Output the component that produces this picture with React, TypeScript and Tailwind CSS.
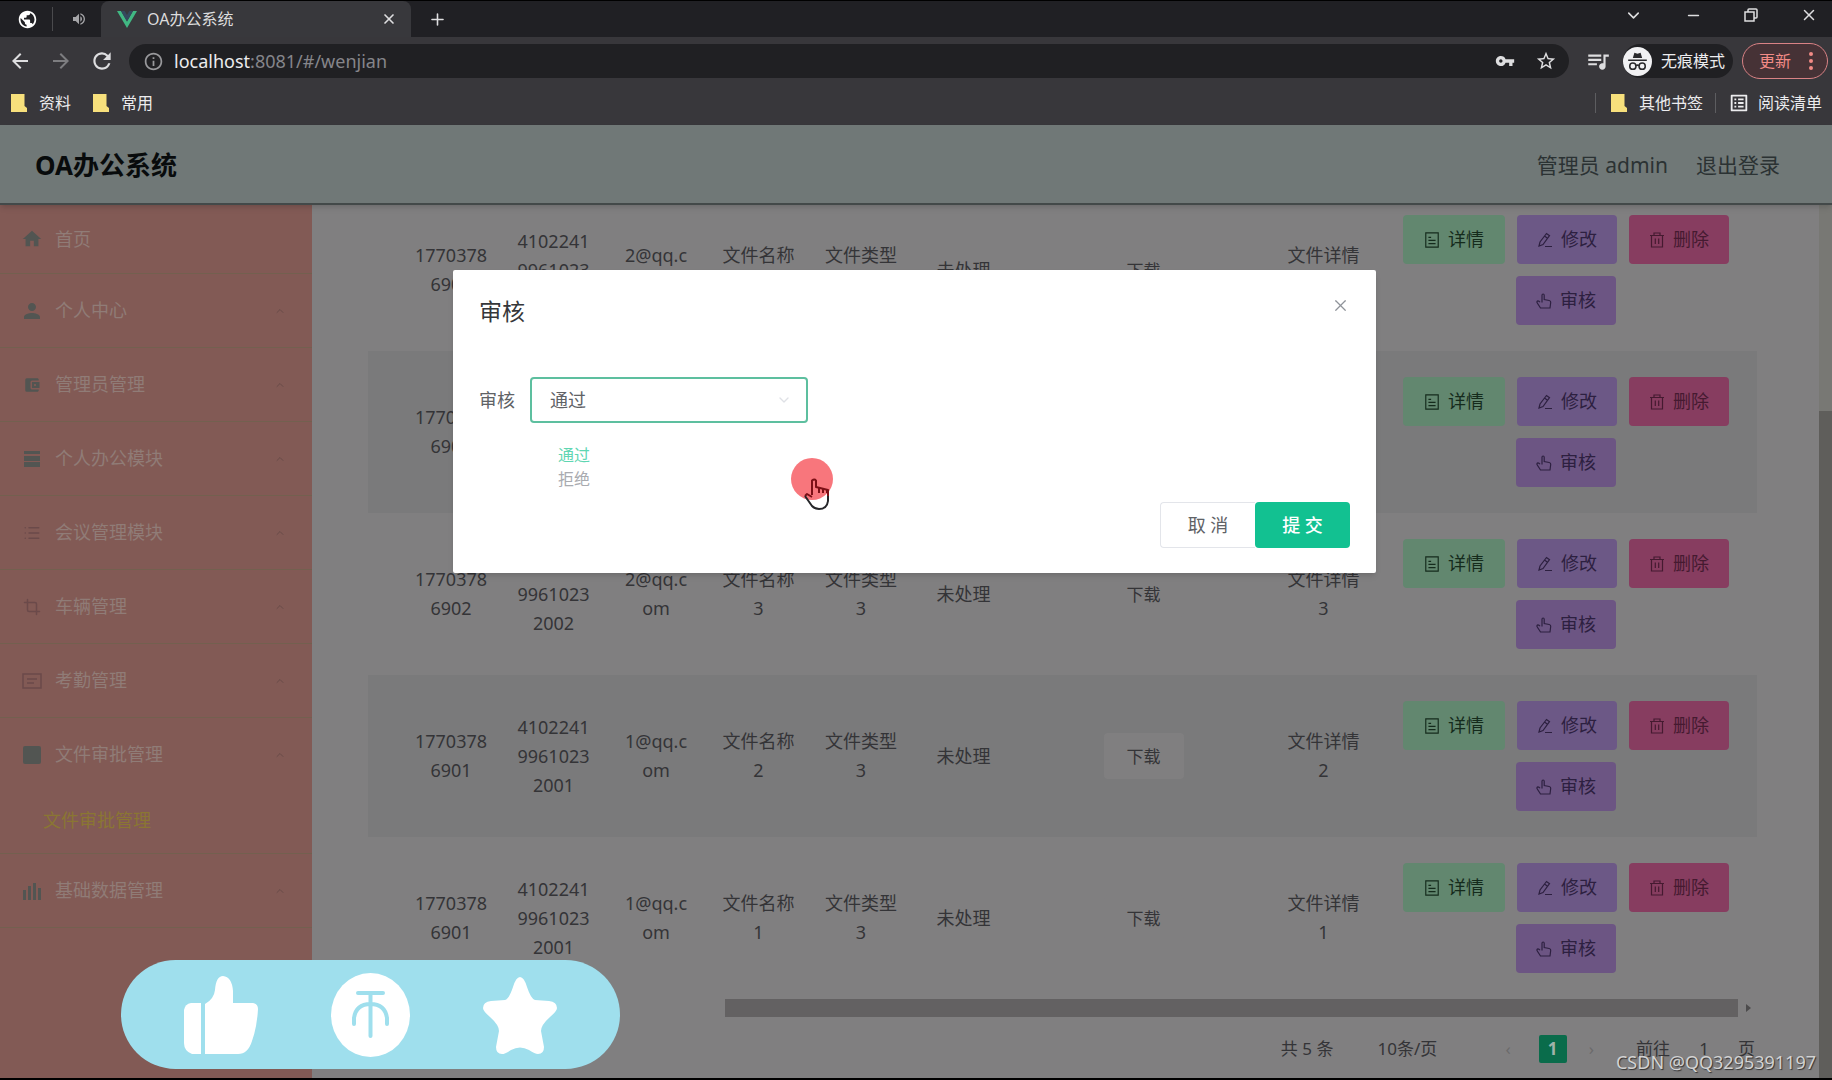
import { useState } from 'react';
import type { ReactNode } from 'react';
import {
  MdAccountBalanceWallet,
  MdArrowBack,
  MdArrowForward,
  MdHome,
  MdInfoOutline,
  MdListAlt,
  MdPerson,
  MdPublic,
  MdQueueMusic,
  MdRefresh,
  MdStarBorder,
  MdVolumeUp,
  MdVpnKey,
} from 'react-icons/md';
import {
  ChevronDown,
  ChevronUp,
  Crop,
  List,
  Minus,
  Plus,
  X,
} from 'lucide-react';

const files = [
  { phone: '17703786903', idCard: '410224199610232003', email: '2@qq.com', name: '文件名称5', type: '文件类型3', detail: '文件详情5' },
  { phone: '17703786902', idCard: '410224199610232002', email: '2@qq.com', name: '文件名称4', type: '文件类型3', detail: '文件详情4' },
  { phone: '17703786902', idCard: '410224199610232002', email: '2@qq.com', name: '文件名称3', type: '文件类型3', detail: '文件详情3' },
  { phone: '17703786901', idCard: '410224199610232001', email: '1@qq.com', name: '文件名称2', type: '文件类型3', detail: '文件详情2' },
  { phone: '17703786901', idCard: '410224199610232001', email: '1@qq.com', name: '文件名称1', type: '文件类型3', detail: '文件详情1' },
];

const App = () => {
  const [open, setOpen] = useState(true);

  return (
    <div className="relative flex h-screen flex-col overflow-hidden border-b-2 border-black bg-[#807f80] font-['Noto_Sans','Noto_Sans_CJK_SC',sans-serif]">
      <BrowserBar />
      <header className="z-10 flex h-[80px] shrink-0 items-center border-b-2 border-[#434949] bg-[#707877] pt-[3px] pr-[52px] pl-[35px] shadow-md">
        <h1 className="grow text-[26px] font-bold text-[#080b0c]">OA办公系统</h1>
        <span className="text-[21px] text-[#2b3233]">管理员 admin</span>
        <a href="#/login" className="ml-[28px] text-[21px] text-[#2b3233]">
          退出登录
        </a>
      </header>
      <div className="flex min-h-0 grow">
        <Sidebar />
        <FileTable />
        <div className="flex w-[13px] shrink-0 flex-col bg-[#787874] pt-[206px]">
          <div className="grow bg-[#5f5e5b]" />
        </div>
      </div>
      {open && <ReviewDialog onClose={() => setOpen(false)} />}
      <LikeBar />
      <p className="absolute right-[16px] bottom-[2px] text-[18px] leading-[28px] text-[#d2d2d2] [text-shadow:1px_1px_1px_#333]">
        CSDN @QQ3295391197
      </p>
    </div>
  );
};

export default App;

const Folder = () => (
  <svg viewBox="0 0 16 18" className="h-[18px] w-[16px]">
    <path d="M0 0h13.5v12L16 14v4H0z" fill="#f7e07c" />
  </svg>
);

const BrowserBar = () => (
  <div className="shrink-0 bg-[#38373b] text-[#dedee0]">
    <div className="flex h-[37px] items-center border-t border-black bg-[#202024] pr-[14px]">
      <div className="flex h-full w-[101px] items-center pl-[17px]">
        <MdPublic size={21} className="text-white" />
        <span className="ml-[14px] h-6 w-px bg-[#4a4a4d]" />
        <MdVolumeUp size={16} className="ml-[18px] text-[#a5a5a8]" />
      </div>
      <div className="flex h-full w-[310px] items-center rounded-t-lg bg-[#38383c] pr-[14px] pl-[16px]">
        <svg viewBox="0 0 20 17" className="h-[17px] w-[20px]">
          <path d="M0 0h4l6 10.500L16 0h4L10 17z" fill="#41b883" />
          <path d="M4 0h3.700L10 4l2.300-4H16l-6 10.500z" fill="#34495e" />
        </svg>
        <span className="ml-[10px] grow text-[16px] text-[#dcdcdd]">OA办公系统</span>
        <button aria-label="关闭标签页">
          <X size={16} strokeWidth={2.500} />
        </button>
      </div>
      <button aria-label="新标签页" className="ml-[17px]">
        <Plus size={19} />
      </button>
      <div className="mb-2 ml-auto flex items-center gap-[42px]">
        <button aria-label="搜索标签页">
          <ChevronDown size={19} />
        </button>
        <button aria-label="最小化">
          <Minus size={17} />
        </button>
        <button aria-label="还原">
          <svg viewBox="0 0 14 14" className="h-[14px] w-[14px]" fill="none" stroke="currentColor" strokeWidth="1.500">
            <path d="M1 4h9v9H1zM4 4V2q0-1 1-1h7q1 0 1 1v7q0 1-1 1h-2" />
          </svg>
        </button>
        <button aria-label="关闭">
          <X size={18} />
        </button>
      </div>
    </div>

    <div className="flex h-[48px] items-center pr-[4px] pl-[8px]">
      <button aria-label="后退">
        <MdArrowBack size={24} />
      </button>
      <button aria-label="前进" className="ml-[17px]">
        <MdArrowForward size={24} className="text-[#7d7d80]" />
      </button>
      <button aria-label="刷新" className="ml-[16px]">
        <MdRefresh size={26} />
      </button>
      <div className="ml-[14px] flex h-[34px] grow items-center rounded-full bg-[#202023] pr-[12px] pl-[14px]">
        <MdInfoOutline size={21} className="text-[#98989b]" />
        <span className="ml-[10px] grow text-[18px] text-[#85858a]">
          <span className="text-[#ececee]">localhost</span>:8081/#/wenjian
        </span>
        <MdVpnKey size={20} />
        <MdStarBorder size={22} className="ml-[20px]" />
      </div>
      <MdQueueMusic size={26} className="ml-[16px]" />
      <div className="ml-[12px] flex h-[34px] items-center rounded-full bg-[#202023] pr-[8px]">
        <svg viewBox="0 0 28 28" className="h-[29px] w-[29px]">
          <circle cx="14" cy="14" r="14" fill="#f1f1f3" />
          <path d="M9.500 10.500 11 5.500l3 1 3-1 1.500 5zM5 12h18v1.500H5z" fill="#2a2a2d" />
          <g fill="none" stroke="#2a2a2d" strokeWidth="1.500">
            <circle cx="9.500" cy="18.500" r="3" />
            <circle cx="18.500" cy="18.500" r="3" />
            <path d="M12.500 18q1.500-1 3 0" />
          </g>
        </svg>
        <span className="ml-[9px] text-[16px] text-[#ececee]">无痕模式</span>
      </div>
      <button className="ml-[9px] flex h-[36px] items-center gap-[18px] rounded-full border border-[#d98285] bg-[#463236] pr-[14px] pl-[16px] text-[16px] text-[#f28b86]">
        更新
        <svg viewBox="0 0 4 18" className="h-[18px] w-[4px]" fill="currentColor">
          <circle cx="2" cy="2" r="2" />
          <circle cx="2" cy="9" r="2" />
          <circle cx="2" cy="16" r="2" />
        </svg>
      </button>
    </div>

    <div className="flex h-[40px] items-center pr-[10px] pb-[4px] pl-[11px] text-[16px] text-[#ececee]">
      <Folder />
      <a href="#/bookmarks/data" className="ml-[12px]">资料</a>
      <span className="w-[22px]" />
      <Folder />
      <a href="#/bookmarks/common" className="ml-[12px]">常用</a>
      <span className="mr-[15px] ml-auto h-5 w-px bg-[#5d5d60]" />
      <Folder />
      <a href="#/bookmarks/other" className="ml-[12px]">其他书签</a>
      <span className="mx-[12px] h-5 w-px bg-[#5d5d60]" />
      <MdListAlt size={22} />
      <a href="#/reading" className="ml-[8px]">阅读清单</a>
    </div>
  </div>
);

const menu: { label: string; icon: ReactNode; child?: string }[] = [
  { label: '首页', icon: <MdHome size={22} /> },
  { label: '个人中心', icon: <MdPerson size={24} /> },
  { label: '管理员管理', icon: <MdAccountBalanceWallet size={18} /> },
  {
    label: '个人办公模块',
    icon: (
      <svg viewBox="0 0 18 18" className="h-[18px] w-[18px]" fill="currentColor">
        <path d="M1 1h16v3H1zM1 6h16v5H1zM1 12h16v5H1z" />
      </svg>
    ),
  },
  { label: '会议管理模块', icon: <List size={18} className="text-[#6b4a4a]" /> },
  { label: '车辆管理', icon: <Crop size={18} className="text-[#6b4a4a]" /> },
  {
    label: '考勤管理',
    icon: (
      <svg viewBox="0 0 20 16" className="h-[16px] w-[20px] text-[#6b4a4a]" fill="none" stroke="currentColor" strokeWidth="1.500">
        <path d="M1 1h18v14H1zM5 6h10M5 10h7" />
      </svg>
    ),
  },
  {
    label: '文件审批管理',
    icon: (
      <svg viewBox="0 0 18 18" className="h-[18px] w-[18px]" fill="currentColor">
        <rect width="18" height="18" rx="2" />
      </svg>
    ),
    child: '文件审批管理',
  },
  {
    label: '基础数据管理',
    icon: (
      <svg viewBox="0 0 18 18" className="h-[18px] w-[18px]" fill="currentColor">
        <path d="M0 8h3v10H0zM5 4h3v14H5zM10 1h3v17h-3zM15 6h3v12h-3z" />
      </svg>
    ),
  },
];

const Sidebar = () => (
  <nav className="w-[312px] shrink-0 bg-[#825a55]">
    {menu.map((item, i) => (
      <div key={item.label} className="border-b border-[#73604f]">
        <a href="#/" className={i === 0 ? 'flex h-[68px] items-center' : 'flex h-[73px] items-center'}>
          <span className="ml-[20px] flex w-[24px] justify-center text-[#525552]">{item.icon}</span>
          <span className="ml-[11px] grow text-[18px] text-[#907c77]">{item.label}</span>
          {i > 0 && <ChevronUp size={12} className="mr-[26px] text-[#694b48]" />}
        </a>
        {item.child && (
          <a href="#/wenjian" className="flex h-[62px] items-center pb-[4px] pl-[43px] text-[18px] text-[#8a7633]">
            {item.child}
          </a>
        )}
      </div>
    ))}
  </nav>
);

const TicketIcon = () => (
  <svg viewBox="0 0 16 18" className="h-[16px] w-[16px]" fill="none" stroke="currentColor" strokeWidth="1.300">
    <path d="M1 1h14v16H1zM4 6h3M4 9.500h8M4 13h8" />
  </svg>
);

const EditIcon = () => (
  <svg viewBox="0 0 16 16" className="h-[16px] w-[16px]" fill="none" stroke="currentColor" strokeWidth="1.200">
    <path d="M2 14l1-4 6.500-8.500 3 2.200L6 12.500zM7.500 4l3 2.300M8 14.500h7" />
  </svg>
);

const DeleteIcon = () => (
  <svg viewBox="0 0 16 16" className="h-[16px] w-[16px]" fill="none" stroke="currentColor" strokeWidth="1.200">
    <path d="M1 3.500h14M5 3.500V1h6v2.500M2.500 3.500V15h11V3.500M6.300 6.500v5.500M9.700 6.500v5.500" />
  </svg>
);

const PointerIcon = () => (
  <svg viewBox="0 0 16 16" className="h-[16px] w-[16px]" fill="none" stroke="currentColor" strokeWidth="1.200">
    <path d="M6 9.500V2.200q0-1.200 1.100-1.200t1.100 1.200V6.500l5 1q1.800.400 1.500 2L14 15H4.500L1 9.500q-.300-1.500 1-1.700 1.200 0 2 1.500" />
  </svg>
);

const ActionButton = ({ className, icon, label }: { className: string; icon: ReactNode; label: string }) => (
  <button className={`flex h-[49px] items-center justify-center gap-2 rounded text-[18px] ${className}`}>
    {icon}
    {label}
  </button>
);

const FileTable = () => (
  <main className="min-w-0 grow overflow-hidden pr-[62px] pl-[56px]">
    {/* list is scrolled, the first row sits partly under the header */}
    <table className="-mt-[16px] w-full table-fixed text-center text-[18px] leading-[29px] break-all text-[#343437]">
      <colgroup>
        <col className="w-[32px]" />
        <col className="w-[102px]" />
        <col className="w-[103px]" />
        <col className="w-[102px]" />
        <col className="w-[103px]" />
        <col className="w-[102px]" />
        <col className="w-[103px]" />
        <col className="w-[257px]" />
        <col className="w-[103px]" />
        <col />
      </colgroup>
      <tbody>
        {files.map((f) => (
          <tr key={f.name} className="h-[162px] even:bg-[#7a7a7b]">
            <td />
            <td className="px-[12px]">{f.phone}</td>
            <td className="px-[12px]">{f.idCard}</td>
            <td className="px-[16px]">{f.email}</td>
            <td className="px-[12px]">{f.name}</td>
            <td className="px-[12px]">{f.type}</td>
            <td className="px-[12px]">未处理</td>
            <td>
              <button className="h-[46px] w-[80px] rounded bg-[#807f80] text-[17px]">下载</button>
            </td>
            <td className="px-[12px]">{f.detail}</td>
            <td>
              <div className="flex flex-wrap justify-center gap-x-[12px] gap-y-3">
                <ActionButton className="w-[102px] bg-[#62876f] text-[#152b1c]" icon={<TicketIcon />} label="详情" />
                <ActionButton className="w-[100px] bg-[#6c5886] text-[#2d2040]" icon={<EditIcon />} label="修改" />
                <ActionButton className="w-[100px] bg-[#873d60] text-[#451a30]" icon={<DeleteIcon />} label="删除" />
                <ActionButton className="w-[100px] bg-[#6c5583] text-[#2d2040]" icon={<PointerIcon />} label="审核" />
              </div>
            </td>
          </tr>
        ))}
      </tbody>
    </table>
    <div className="flex h-[18px] items-center pl-[357px]">
      <div className="h-full grow bg-[#636162]" />
      <svg viewBox="0 0 5 8" className="mr-[6px] ml-[8px] h-[8px] w-[5px]" fill="#4c4b4c">
        <path d="M0 0l5 4-5 4z" />
      </svg>
    </div>
    <div className="mt-[16px] flex h-[32px] items-center justify-end pr-[2px] text-[17px] text-[#343437]">
      <span>共 5 条</span>
      <select aria-label="每页条数" defaultValue="10" className="ml-[44px] w-[100px] appearance-none">
        <option value="10">10条/页</option>
      </select>
      <button aria-label="上一页" className="ml-[28px] text-[#6b6a6b]">‹</button>
      <button className="ml-[28px] h-[28px] w-[28px] rounded-xs bg-[#0a6c4b] font-bold text-[#9fb3aa]">1</button>
      <button aria-label="下一页" className="ml-[22px] text-[#6b6a6b]">›</button>
      <label htmlFor="page" className="ml-[42px]">前往</label>
      <input id="page" defaultValue="1" className="w-[68px] text-center" />
      <span>页</span>
    </div>
  </main>
);

const ReviewDialog = ({ onClose }: { onClose: () => void }) => {
  const [result, setResult] = useState('通过');

  return (
    <div className="absolute inset-0 z-20 flex items-start justify-center pt-[270px] pr-[3px]">
      <div role="dialog" aria-label="审核" className="relative w-[923px] rounded-xs bg-white px-[26px] pt-[24px] pb-[25px] shadow-md">
        <div className="flex h-[34px] items-center justify-between">
          <h2 className="text-[23px] text-[#35373a]">审核</h2>
          <button aria-label="关闭" onClick={onClose} className="mb-3 text-[#8f9399]">
            <X size={19} strokeWidth={1.500} />
          </button>
        </div>
        <div className="relative mt-[49px] flex items-center">
          <label htmlFor="result" className="w-[51px] text-[18px] text-[#606266]">
            审核
          </label>
          <select
            id="result"
            value={result}
            onChange={(e) => setResult(e.target.value)}
            className="h-[46px] w-[278px] appearance-none rounded border-2 border-[#5dbf9f] bg-white px-[18px] text-[18px] text-[#606266]"
          >
            <option>通过</option>
            <option>拒绝</option>
          </select>
          <ChevronDown size={16} className="-ml-[32px] text-[#dfe1e6]" />
          <ul className="absolute top-[66px] left-[79px] text-[16px] leading-[24px]">
            <li className="text-[#5fd6b2]">通过</li>
            <li className="text-[#a9abb0]">拒绝</li>
          </ul>
          {/* click marker with the hand cursor */}
          <svg viewBox="0 0 44 54" className="absolute top-[80px] left-[312px] h-[54px] w-[44px]">
            <circle cx="21" cy="22" r="21" fill="#f8767c" />
            <g fill="none" strokeWidth="2" strokeLinejoin="round">
              <path d="M21 38V23.500q2.500-2 4 0V30l12 3v9" stroke="#7c1016" />
              <path d="M28 30v6M32 31v5M36 32v4M21 40l-5-3-2 2" stroke="#7c1016" />
              <path d="M14 39l7 10q3 3 7 3 8 0 9-8v-5" stroke="#26272a" />
            </g>
          </svg>
        </div>
        <div className="mt-[79px] flex justify-end text-[18px]">
          <button onClick={onClose} className="h-[46px] w-[95px] rounded-l border border-r-0 border-[#e3e5ea] text-[#606266]">
            取 消
          </button>
          <button onClick={onClose} className="h-[46px] w-[95px] rounded bg-[#12c191] font-medium text-white">
            提 交
          </button>
        </div>
      </div>
    </div>
  );
};

const LikeBar = () => (
  <div className="absolute bottom-[9px] left-[121px] z-20 flex h-[109px] w-[499px] items-center justify-between rounded-full bg-[#9fdfed] px-[63px]">
    <button aria-label="点赞">
      <svg viewBox="0 0 74 78" className="h-[78px] w-[74px]" fill="#fff">
        <path d="M7 27h10v51H8q-8-3-8-11V34q1-6 7-7z" />
        <path d="M21 78V28q9-5 10-14 1-14 8-14 9 1 10 15v12h20q5 1 5 6-1 18-6 32-4 13-14 13z" />
      </svg>
    </button>
    <button aria-label="投币">
      <svg viewBox="0 0 79 84" className="h-[84px] w-[79px]">
        <ellipse cx="39.500" cy="42" rx="39.500" ry="42" fill="#fff" />
        <g fill="none" stroke="#9fdfed" strokeWidth="4" strokeLinecap="round">
          <path d="M27 20h25M39.500 20v43M23 51v-6q2-14 16.500-14T56 45v6" />
        </g>
      </svg>
    </button>
    <button aria-label="收藏">
      <svg viewBox="0 0 74 78" className="h-[78px] w-[74px]" fill="#fff">
        <path d="M37 1q4 0 7 10 4 12 8 13l14 1q8 1 8 7 0 3-7 9-9 8-9 14l3 16q0 7-6 7-3 0-9-4-9-5-18 0-6 4-9 4-6 0-6-7l3-16q0-6-9-14-7-6-7-9 0-6 8-7l14-1q4-1 8-13 3-10 7-10z" />
      </svg>
    </button>
  </div>
);
